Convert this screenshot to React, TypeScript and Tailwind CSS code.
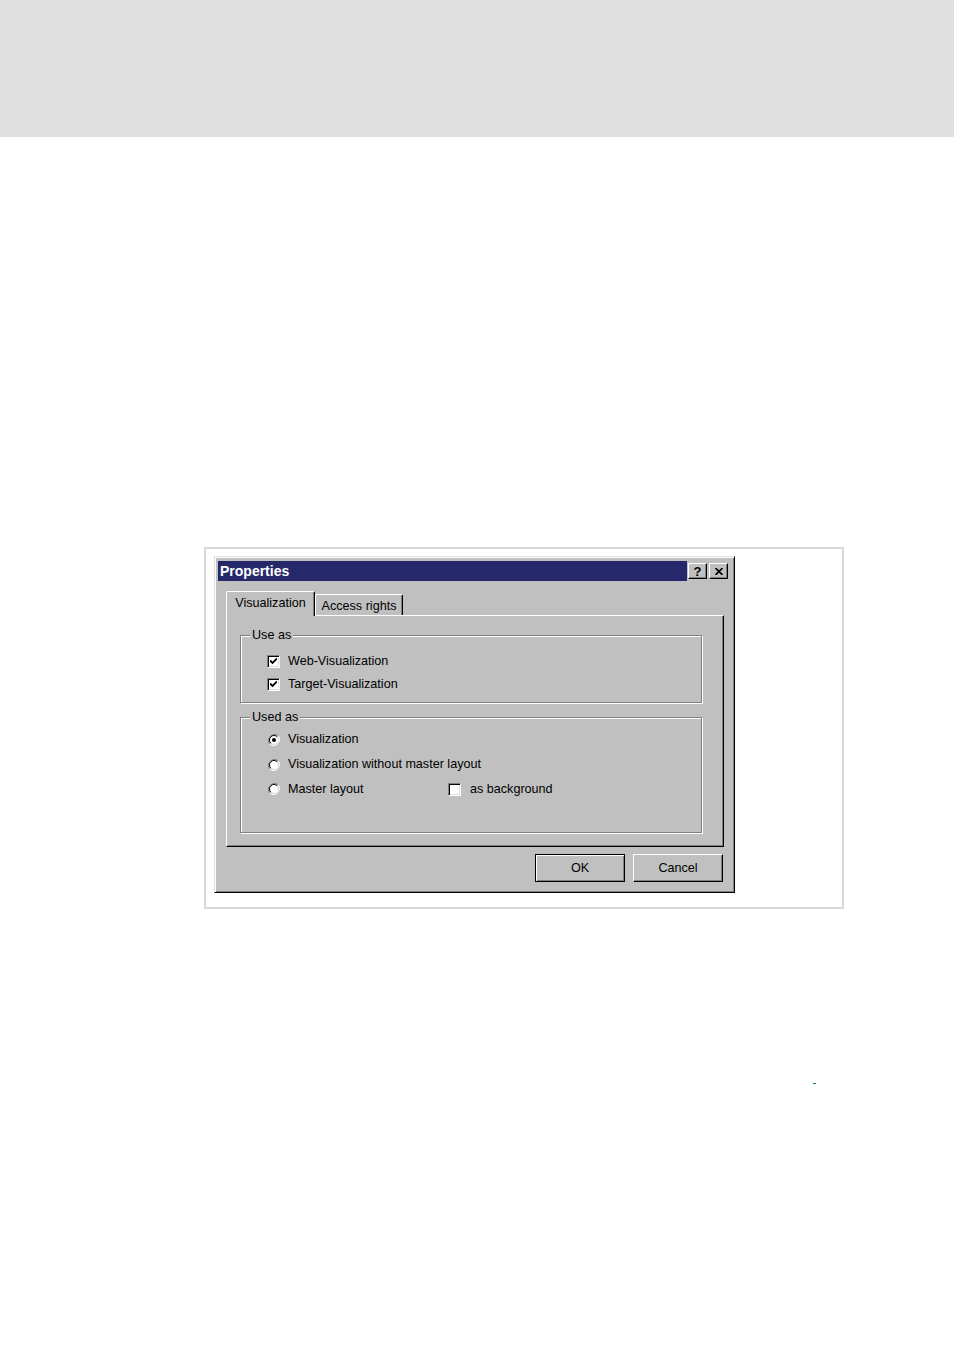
import React from "react";

const font = { fontFamily: '"Liberation Sans", Arial, sans-serif' };

function CheckBox({ checked }: { checked?: boolean }) {
	return (
		<span className="flex h-[13px] w-[13px] shrink-0 items-center justify-center border border-t-[#808080] border-l-[#808080] border-r-white border-b-white bg-white shadow-[inset_1px_1px_#000,inset_-1px_-1px_#dfdfdf]">
			{checked && (
				<svg viewBox="0 0 7 7" className="h-[7px] w-[7px]" aria-hidden="true">
					<path d="M0 2.5 L2.5 5 L7 0.5" fill="none" stroke="#000" strokeWidth="1.8" />
				</svg>
			)}
		</span>
	);
}

function Radio({ checked }: { checked?: boolean }) {
	return (
		<svg viewBox="0 0 12 12" className="h-[12px] w-[12px] shrink-0" aria-hidden="true">
			<path d="M10.2 1.8 A6 6 0 0 0 1.8 10.2" fill="none" stroke="#808080" strokeWidth="1" />
			<path d="M1.8 10.2 A6 6 0 0 0 10.2 1.8" fill="none" stroke="#fff" strokeWidth="1" />
			<circle cx="6" cy="6" r="4.5" fill="#fff" />
			<path d="M9.2 2.8 A4.5 4.5 0 0 0 2.8 9.2" fill="none" stroke="#000" strokeWidth="1" />
			<path d="M2.8 9.2 A4.5 4.5 0 0 0 9.2 2.8" fill="none" stroke="#dfdfdf" strokeWidth="1" />
			{checked && <circle cx="6" cy="6" r="2" fill="#000" />}
		</svg>
	);
}

function GroupBox({ label, className, children }: { label: string; className: string; children: React.ReactNode }) {
	return (
		<div className={`relative w-[462px] border border-[#808080] shadow-[inset_1px_1px_#fff,1px_1px_#fff] ${className}`}>
			<span className="absolute -top-[9px] left-[9px] bg-[#c0c0c0] px-[2px] leading-[16px]">{label}</span>
			{children}
		</div>
	);
}

export default function App() {
	return (
		<div className="min-h-[1350px] w-[954px] bg-white text-[12.6px] text-black" style={font}>
			<div className="h-[137px] bg-[#e0e0e0]" />

			<div className="ml-[204px] mt-[410px] h-[362px] w-[640px] border-2 border-[#d9d9d9] bg-white pl-[8px] pt-[7px]">
				{/* dialog */}
				<div className="h-[337px] w-[521px] border border-t-[#dfdfdf] border-l-[#dfdfdf] border-r-black border-b-black bg-[#c0c0c0] px-[3px] pt-[4px] shadow-[inset_1px_1px_#fff,inset_-1px_-1px_#808080]">
					<div className="flex items-center">
						<div className="flex h-[20px] w-[469px] items-center bg-[#25296b] pl-[2px] text-[14px] font-bold text-white">
							Properties
						</div>
						<div className="ml-[1px] flex h-[16px] w-[19px] items-center justify-center border border-t-white border-l-white border-r-black border-b-black text-[13px] font-bold leading-none shadow-[inset_-1px_-1px_#808080]">
							?
						</div>
						<div className="ml-[2px] flex h-[16px] w-[19px] items-center justify-center border border-t-white border-l-white border-r-black border-b-black shadow-[inset_-1px_-1px_#808080]">
							<svg viewBox="0 0 8 7" className="h-[7px] w-[8px]" aria-hidden="true">
								<path d="M0.5 0 L7.5 7 M7.5 0 L0.5 7" stroke="#000" strokeWidth="1.6" />
							</svg>
						</div>
					</div>

					{/* tabs */}
					<div className="ml-[8px] mt-[10px] flex h-[24px] items-end">
						<div className="relative z-10 -mb-[1px] flex h-[25px] w-[89px] items-center justify-center rounded-t-[2px] border border-b-0 border-t-white border-l-white border-r-black bg-[#c0c0c0] pb-[2px] shadow-[inset_-1px_0_#808080]">
							Visualization
						</div>
						<div className="flex h-[21px] w-[88px] items-center justify-center rounded-t-[2px] border border-b-0 border-t-white border-l-white border-r-black pt-[2px] shadow-[inset_-1px_0_#808080]">
							Access rights
						</div>
					</div>

					<div className="ml-[8px] h-[232px] w-[498px] border border-t-white border-l-white border-r-black border-b-black pl-[13px] pt-[19px] shadow-[inset_-1px_-1px_#808080]">
						<GroupBox label="Use as" className="h-[68px] pl-[26px] pt-[14px]">
							<div className="flex h-[23px] items-center gap-[8px]">
								<CheckBox checked />
								<span>Web-Visualization</span>
							</div>
							<div className="flex h-[23px] items-center gap-[8px]">
								<CheckBox checked />
								<span>Target-Visualization</span>
							</div>
						</GroupBox>

						<GroupBox label="Used as" className="mt-[14px] h-[116px] pl-[27px] pt-[9px]">
							<div className="flex h-[25px] items-center gap-[8px]">
								<Radio checked />
								<span>Visualization</span>
							</div>
							<div className="flex h-[25px] items-center gap-[8px]">
								<Radio />
								<span>Visualization without master layout</span>
							</div>
							<div className="flex h-[25px] items-center">
								<div className="flex w-[180px] items-center gap-[8px]">
									<Radio />
									<span>Master layout</span>
								</div>
								<div className="flex items-center gap-[9px]">
									<CheckBox />
									<span>as background</span>
								</div>
							</div>
						</GroupBox>
					</div>

					<div className="mt-[7px] flex w-[505px] justify-end gap-[8px]">
						<div className="flex h-[28px] w-[90px] items-center justify-center border border-black shadow-[inset_1px_1px_#fff,inset_-1px_-1px_#808080]">
							OK
						</div>
						<div className="flex h-[28px] w-[90px] items-center justify-center border border-t-white border-l-white border-r-black border-b-black shadow-[inset_-1px_-1px_#808080]">
							Cancel
						</div>
					</div>
				</div>
			</div>

			<div className="ml-[813px] mt-[174px] h-[1px] w-[3px] bg-[#1a7a3a]" />
		</div>
	);
}
